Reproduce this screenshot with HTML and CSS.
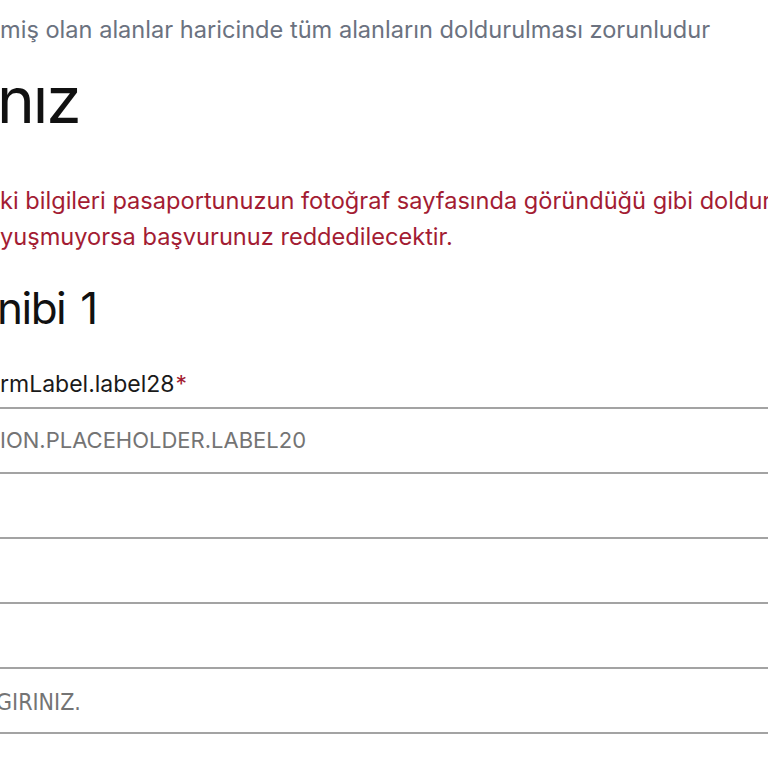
FILE: index.html
```html
<!DOCTYPE html>
<html lang="tr">
<head>
  <meta charset="UTF-8">
  <meta name="viewport" content="width=device-width, initial-scale=1.0">
  <link rel="stylesheet" href="styles.css">
</head>
<body>
<div class="page">
  <p class="required-note">miş olan alanlar haricinde tüm alanların doldurulması zorunludur</p>
  <h1 class="page-title">nız</h1>
  <p class="warning">ki bilgileri pasaportunuzun fotoğraf sayfasında göründüğü gibi doldurunuz.<br>yuşmuyorsa başvurunuz reddedilecektir.</p>
  <h2 class="section-title">nibi 1</h2>
  <div class="field">
    <label class="field-label">rmLabel.label28<span class="req">*</span></label>
    <div class="field-inputs">
      <input type="text" class="field-input" placeholder="ION.PLACEHOLDER.LABEL20">
      <input type="text" class="field-input">
      <input type="text" class="field-input">
      <input type="text" class="field-input">
      <input type="text" class="field-input alt-font" placeholder="GIRINIZ.">
    </div>
  </div>
</div>
</body>
</html>
```

FILE: styles.css
```css
body {
  margin: 0;
  overflow: hidden;
  background-color: #fff;
  font-family: Inter, "Noto Sans", sans-serif;
  color: #111;
}

.page {
  padding-top: 16px;
  white-space: nowrap;
}

.required-note {
  margin: 0;
  font-size: 23.6px;
  line-height: 28px;
  color: #6b7280;
}

.page-title {
  margin: 18px 0 0 -3px;
  font-size: 64px;
  line-height: 1.2;
  font-weight: 400;
  letter-spacing: -2px;
  color: #111;
}

.warning {
  margin: 44px 0 0;
  font-size: 23.6px;
  line-height: 36px;
  color: #a31c33;
}

.section-title {
  margin: 27px 0 0 -3px;
  font-size: 44px;
  line-height: 1.2;
  font-weight: 400;
  letter-spacing: -1.5px;
  word-spacing: 4px;
  color: #111;
}

.field {
  margin-top: 35px;
}

.field-label {
  display: block;
  font-size: 23px;
  line-height: 28px;
  color: #1a1a1a;
}

.req {
  color: #a31c33;
  margin-left: 1px;
}

.field-inputs {
  margin-top: 9px;
  border-top: 2px solid #a3a3a3;
}

.field-input {
  display: block;
  box-sizing: border-box;
  width: 100%;
  height: 65px;
  margin: 0;
  padding: 0;
  border: none;
  border-bottom: 2px solid #a3a3a3;
  font-family: Inter, "Noto Sans", sans-serif;
  font-size: 22px;
  color: #222;
  background: #fff;
  outline: none;
}

.field-input::placeholder {
  color: #747474;
}

.alt-font {
  font-family: "DejaVu Sans Condensed", "DejaVu Sans", sans-serif;
  font-stretch: condensed;
  font-size: 23px;
  padding-top: 4px;
  text-indent: -4px;
}
```
